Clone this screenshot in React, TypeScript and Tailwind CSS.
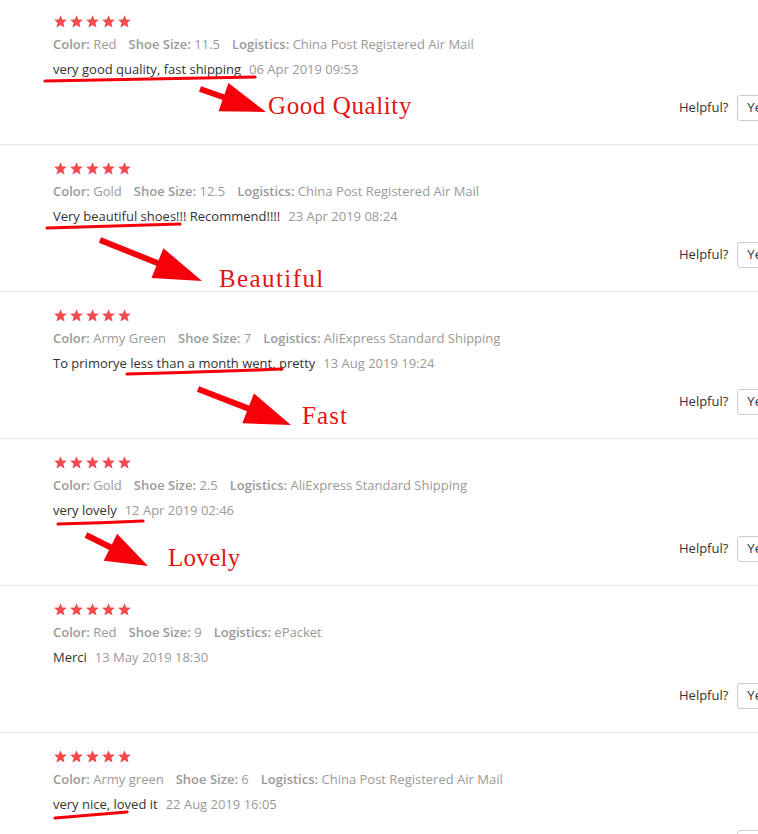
import React from "react";

type Review = {
  color: string;
  size: string;
  logistics: string;
  text: string;
  date: string;
};

const reviews: Review[] = [
  { color: "Red", size: "11.5", logistics: "China Post Registered Air Mail", text: "very good quality, fast shipping", date: "06 Apr 2019 09:53" },
  { color: "Gold", size: "12.5", logistics: "China Post Registered Air Mail", text: "Very beautiful shoes!!! Recommend!!!!", date: "23 Apr 2019 08:24" },
  { color: "Army Green", size: "7", logistics: "AliExpress Standard Shipping", text: "To primorye less than a month went, pretty", date: "13 Aug 2019 19:24" },
  { color: "Gold", size: "2.5", logistics: "AliExpress Standard Shipping", text: "very lovely", date: "12 Apr 2019 02:46" },
  { color: "Red", size: "9", logistics: "ePacket", text: "Merci", date: "13 May 2019 18:30" },
  { color: "Army green", size: "6", logistics: "China Post Registered Air Mail", text: "very nice, loved it", date: "22 Aug 2019 16:05" },
];

function Stars() {
  return (
    <div className="flex gap-[3px] h-[13px]">
      {[0, 1, 2, 3, 4].map((i) => (
        <svg key={i} width="13" height="13" viewBox="0 0 12 12">
          <polygon
            points="6,0.2 7.6,4.1 11.9,4.4 8.6,7.2 9.7,11.6 6,9.2 2.3,11.6 3.4,7.2 0.1,4.4 4.4,4.1"
            fill="#f4484b"
          />
        </svg>
      ))}
    </div>
  );
}

function ReviewBlock({ r }: { r: Review }) {
  return (
    <div className="h-[147px] border-b border-[#e8e8e8] pt-[17px] pl-[53px]">
      <div className="pl-[1px]">
        <Stars />
      </div>
      <div className="mt-[6px] flex text-[13px] leading-[20px] text-[#9a9a9a] whitespace-nowrap">
        <span className="mr-[12px]">
          <span className="font-semibold">Color:</span> {r.color}
        </span>
        <span className="mr-[12px]">
          <span className="font-semibold">Shoe Size:</span> {r.size}
        </span>
        <span>
          <span className="font-semibold">Logistics:</span> {r.logistics}
        </span>
      </div>
      <div className="mt-[5px] flex text-[13px] leading-[20px] whitespace-nowrap">
        <span className="text-[#333]">{r.text}</span>
        <span className="ml-[8px] text-[#9a9a9a]">{r.date}</span>
      </div>
      <div className="mt-[16px] flex items-center pl-[626px] whitespace-nowrap">
        <span className="text-[13px] text-[#333]">Helpful?</span>
        <button className="ml-[9px] h-[26px] px-[9px] border border-[#cccccc] rounded-[3px] text-[13px] text-[#333] bg-white">
          Yes (0)
        </button>
        <button className="ml-[8px] h-[26px] px-[9px] border border-[#cccccc] rounded-[3px] text-[13px] text-[#333] bg-white">
          No (0)
        </button>
      </div>
    </div>
  );
}

type Arrow = { x1: number; y1: number; x2: number; y2: number; hl: number; hw: number };

const arrows: Arrow[] = [
  { x1: 200, y1: 89, x2: 266, y2: 112, hl: 45, hw: 15 },
  { x1: 100, y1: 240, x2: 202, y2: 281, hl: 48, hw: 16 },
  { x1: 198, y1: 389, x2: 291, y2: 425, hl: 46, hw: 16 },
  { x1: 86, y1: 535, x2: 148, y2: 566, hl: 42, hw: 15 },
];

const underlines = [
  "M45 81 Q150 79 255 77",
  "M47 228 Q115 226 180 224",
  "M127 374 Q205 372 282 369",
  "M58 524 Q100 523 143 521",
  "M55 818 Q92 815 127 812",
];

function ArrowShape({ a }: { a: Arrow }) {
  const dx = a.x2 - a.x1;
  const dy = a.y2 - a.y1;
  const len = Math.sqrt(dx * dx + dy * dy);
  const ux = dx / len;
  const uy = dy / len;
  const px = -uy;
  const py = ux;
  const bx = a.x2 - ux * a.hl;
  const by = a.y2 - uy * a.hl;
  const p1 = `${bx + px * a.hw},${by + py * a.hw}`;
  const p2 = `${bx - px * a.hw},${by - py * a.hw}`;
  const sx = a.x2 - ux * (a.hl - 4);
  const sy = a.y2 - uy * (a.hl - 4);
  return (
    <g>
      <line x1={a.x1} y1={a.y1} x2={sx} y2={sy} stroke="#f5000a" strokeWidth="6" />
      <polygon points={`${p1} ${a.x2},${a.y2} ${p2}`} fill="#f5000a" />
    </g>
  );
}

export default function App() {
  return (
    <div
      className="relative w-[758px] h-[834px] overflow-hidden bg-white"
      style={{ fontFamily: '"Open Sans", "Liberation Sans", sans-serif' }}
    >
      <div className="-mt-[2px]">
        {reviews.map((r, i) => (
          <ReviewBlock key={i} r={r} />
        ))}
      </div>

      <svg className="absolute left-0 top-0 pointer-events-none" width="758" height="834">
        {underlines.map((d, i) => (
          <path key={i} d={d} stroke="#f5000a" strokeWidth="3.2" fill="none" strokeLinecap="round" />
        ))}
        {arrows.map((a, i) => (
          <ArrowShape key={i} a={a} />
        ))}
      </svg>

      <span
        className="absolute left-[268px] top-[93px] text-[25px] leading-[25px] tracking-[0.6px] text-[#e41414] whitespace-nowrap"
        style={{ fontFamily: '"Liberation Serif", serif' }}
      >
        Good Quality
      </span>
      <span
        className="absolute left-[219px] top-[266px] text-[25px] leading-[25px] tracking-[1.4px] text-[#e41414] whitespace-nowrap"
        style={{ fontFamily: '"Liberation Serif", serif' }}
      >
        Beautiful
      </span>
      <span
        className="absolute left-[302px] top-[403px] text-[25px] leading-[25px] tracking-[1.1px] text-[#e41414] whitespace-nowrap"
        style={{ fontFamily: '"Liberation Serif", serif' }}
      >
        Fast
      </span>
      <span
        className="absolute left-[168px] top-[545px] text-[25px] leading-[25px] tracking-[0.3px] text-[#e41414] whitespace-nowrap"
        style={{ fontFamily: '"Liberation Serif", serif' }}
      >
        Lovely
      </span>
    </div>
  );
}
